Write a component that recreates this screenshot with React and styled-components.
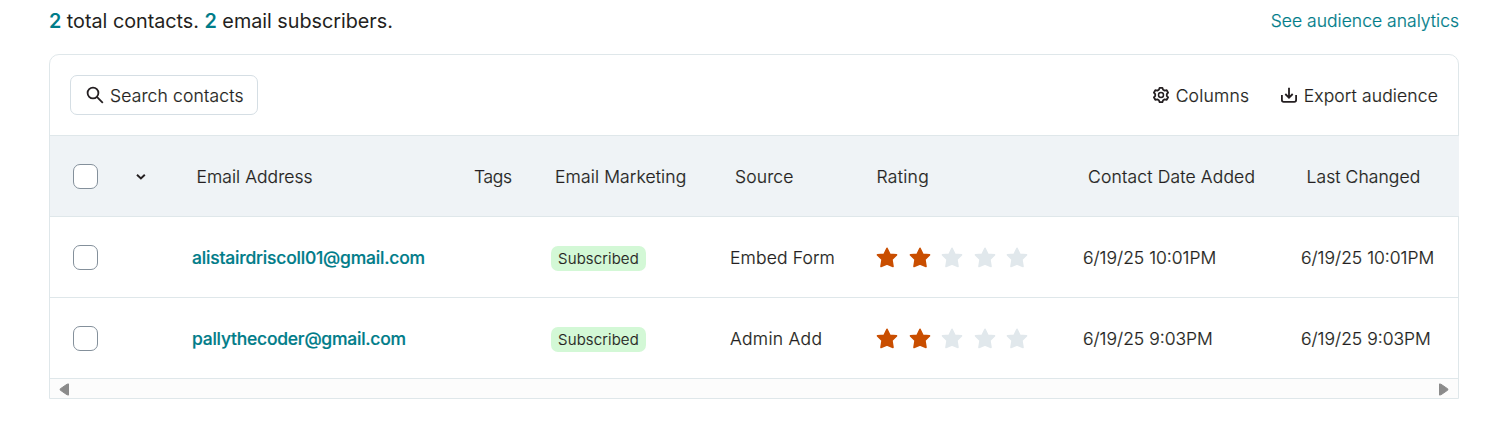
import React from "react";
import styled, { createGlobalStyle } from "styled-components";

const ink = "#241f21";
const teal = "#007c89";
const line = "#dfe7ea";

const GlobalStyle = createGlobalStyle`
  *, *::before, *::after { box-sizing: border-box; }
  body {
    margin: 0;
    background: #fff;
    color: ${ink};
    font-family: Inter, "Liberation Sans", sans-serif;
    font-size: 17.5px;
    font-weight: 300;
    line-height: 24px;
    letter-spacing: 0.16px;
    -webkit-text-stroke: 0.2px;
  }
  button { font: inherit; color: inherit; letter-spacing: inherit; }
`;

const Page = styled.main`
  width: 1506px;
  padding: 0 47px 0 49px;
`;

const Summary = styled.header`
  display: flex;
  align-items: center;
  justify-content: space-between;
  height: 42px;
  margin-bottom: 12px;
`;

const Totals = styled.p`
  margin: 0;
  font-size: 19.8px;
  font-weight: 400;
  letter-spacing: -0.02px;
  -webkit-text-stroke: 0;
`;

const Count = styled.strong`
  color: ${teal};
  font-weight: 600;
`;

const AnalyticsLink = styled.a`
  color: ${teal};
  letter-spacing: 0.02px;
  text-decoration: none;
`;

const Card = styled.section`
  border: 1px solid ${line};
  border-radius: 10px 10px 0 0;
`;

const Toolbar = styled.div`
  display: flex;
  align-items: center;
  justify-content: space-between;
  height: 81px;
  padding: 0 20px;
  border-bottom: 1px solid ${line};
`;

const SearchButton = styled.button`
  display: flex;
  align-items: center;
  gap: 6px;
  width: 188px;
  height: 40px;
  padding: 2px 0 0 15px;
  background: #fff;
  border: 1px solid #d5dee4;
  border-radius: 7px;
  white-space: nowrap;
`;

const Actions = styled.div`
  display: flex;
  gap: 30.5px;
`;

const ActionButton = styled.button`
  display: flex;
  align-items: center;
  gap: 6px;
  padding: 2px 0 0;
  background: none;
  border: 0;
  letter-spacing: ${(p) => p.$track || 0}px;
  white-space: nowrap;
`;

const Icon = styled.svg`
  flex: none;
  display: block;
  margin-top: -2px;
  fill: none;
  stroke: ${ink};
  stroke-width: 1.8;
`;

const SortIcon = styled(Icon)`
  margin-top: 0;
  stroke-width: 2;
`;

const Row = styled.div`
  display: grid;
  grid-template-columns: 67px 75px 277px 82px 179px 142px 211px 218px 157px;
  align-items: center;
  height: 81px;
  border-bottom: 1px solid ${line};
  white-space: nowrap;
`;

const HeadRow = styled(Row)`
  margin-right: -1px;
  background: #eff3f6;
`;

const HeadCell = styled.div`
  padding: 2px 0 0 ${(p) => p.$inset ?? 5}px;
  letter-spacing: ${(p) => p.$track ?? 0.13}px;
`;

const Cell = styled.div`
  padding-top: 1px;
  letter-spacing: ${(p) => p.$track ?? 0.06}px;
`;

const CheckCell = styled.div`
  padding-left: 23px;
`;

const Checkbox = styled.input`
  appearance: none;
  display: block;
  width: 25px;
  height: 25px;
  margin: 1px 0 0;
  background: #fff;
  border: 1px solid #84909b;
  border-radius: 7px;
`;

const EmailLink = styled.a`
  color: ${teal};
  font-weight: 500;
  text-decoration: none;
`;

const Badge = styled.span`
  display: block;
  width: 95px;
  height: 25px;
  margin-top: 2px;
  padding-left: 7px;
  border-radius: 7px;
  background: #d3f8d6;
  font-size: 15px;
  line-height: 25px;
`;

const Stars = styled.div`
  display: flex;
  gap: 10.6px;
  padding: 1px 0 0 4px;
`;

const Star = styled.svg`
  display: block;
  width: 22px;
  height: 22px;
  fill: ${(p) => (p.$on ? "#c94e00" : "#e1e8ec")};
  stroke: ${(p) => (p.$on ? "#c94e00" : "#e1e8ec")};
  stroke-width: 1.6;
  stroke-linejoin: round;
`;

const Scrollbar = styled.div`
  display: flex;
  align-items: center;
  justify-content: space-between;
  height: 19px;
  padding: 1px 9px 0 9px;
  background: #fcfcfc;
`;

const Arrow = styled.svg`
  display: block;
  fill: #8b8b8b;
  stroke: #8b8b8b;
  stroke-linejoin: round;
  transform: scaleX(${(p) => (p.$flip ? -1 : 1)});
`;

const contacts = [
  { email: "alistairdriscoll01@gmail.com", track: -0.2, source: "Embed Form", sourceTrack: 0.15, rating: 2, date: "6/19/25 10:01PM" },
  { email: "pallythecoder@gmail.com", track: -0.24, source: "Admin Add", sourceTrack: 0.3, rating: 2, date: "6/19/25 9:03PM" },
];

const Rating = ({ value }) => (
  <Stars>
    {[1, 2, 3, 4, 5].map((n) => (
      <Star key={n} viewBox="0 0 22 22" $on={n <= value}>
        <path d="M11 1.300 13.800 7.200 20.500 7.900 15.900 12.400 17 19.400 11 16.900 5 19.400 6.100 12.400 1.500 7.900 8.200 7.200Z" />
      </Star>
    ))}
  </Stars>
);

const ScrollArrow = ({ flip }) => (
  <Arrow width="11" height="13" viewBox="0 0 11 13" $flip={flip}>
    <path d="M9.500 0.900v11.200L7.900 11.700 1.200 7.100V5.900L7.900 1.300Z" />
  </Arrow>
);

export default function App() {
  return (
    <>
      <GlobalStyle />
      <Page>
        <Summary>
          <Totals>
            <Count>2</Count> total contacts. <Count>2</Count> email subscribers.
          </Totals>
          <AnalyticsLink>See audience analytics</AnalyticsLink>
        </Summary>
        <Card>
          <Toolbar>
            <SearchButton>
              <Icon width="18" height="18" viewBox="0 0 18 18">
                <circle cx="7" cy="7" r="5.400" />
                <path d="M10.900 10.900 16.800 16.800" />
              </Icon>
              Search contacts
            </SearchButton>
            <Actions>
              <ActionButton $track={0.2}>
                <Icon width="18" height="18" viewBox="0 0 18 18" strokeLinejoin="round">
                  <path d="M7.600 1.800h2.800l.700 1.900 1.600.900 2-.400 1.400 2.500-1.300 1.400v1.800l1.300 1.400-1.400 2.500-2-.400-1.600.900-.700 1.900H7.600l-.700-1.900-1.600-.900-2 .400-1.400-2.500 1.300-1.400V8.100L1.900 6.700l1.400-2.500 2 .400 1.600-.900Z" />
                  <circle cx="9" cy="9" r="2.500" strokeWidth="1.500" />
                </Icon>
                Columns
              </ActionButton>
              <ActionButton $track={0.14}>
                <Icon width="18" height="18" viewBox="0 0 18 18">
                  <path d="M9 1.800v9.500M5.300 8 9 11.700 12.700 8M1.900 9v5q0 1.800 1.800 1.800h10.600q1.800 0 1.800-1.800V9" />
                </Icon>
                Export audience
              </ActionButton>
            </Actions>
          </Toolbar>
          <HeadRow>
            <CheckCell>
              <Checkbox type="checkbox" />
            </CheckCell>
            <HeadCell $inset={18.5}>
              <SortIcon width="10" height="8" viewBox="0 0 10 8">
                <path d="M1 1.800l3.900 3.600L8.800 1.800" />
              </SortIcon>
            </HeadCell>
            <HeadCell $inset={4.5} $track={0.06}>Email Address</HeadCell>
            <HeadCell $track={-0.3}>Tags</HeadCell>
            <HeadCell $inset={4}>Email Marketing</HeadCell>
            <HeadCell>Source</HeadCell>
            <HeadCell $inset={4.5} $track={0.3}>Rating</HeadCell>
            <HeadCell $track={0.17}>Contact Date Added</HeadCell>
            <HeadCell $inset={5.5} $track={0.08}>Last Changed</HeadCell>
          </HeadRow>
          {contacts.map((c) => (
            <Row key={c.email}>
              <CheckCell>
                <Checkbox type="checkbox" />
              </CheckCell>
              <Cell />
              <Cell $track={c.track}>
                <EmailLink>{c.email}</EmailLink>
              </Cell>
              <Cell />
              <Badge>Subscribed</Badge>
              <Cell $track={c.sourceTrack}>{c.source}</Cell>
              <Rating value={c.rating} />
              <Cell $track={0}>{c.date}</Cell>
              <Cell $track={0}>{c.date}</Cell>
            </Row>
          ))}
          <Scrollbar>
            <ScrollArrow />
            <ScrollArrow flip />
          </Scrollbar>
        </Card>
      </Page>
    </>
  );
}
